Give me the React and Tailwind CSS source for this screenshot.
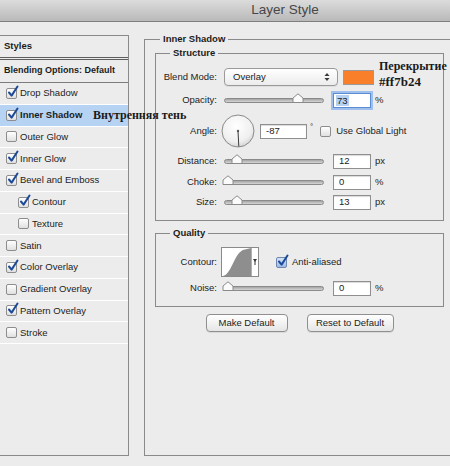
import React from "react";

function Check({ checked, blue }) {
  return (
    <span className="relative inline-block w-[11px] h-[11px] shrink-0">
      <span
        className={
          blue
            ? "absolute inset-0 rounded-[2px] border border-[#6d86ad] bg-linear-to-b from-[#d6e4f7] to-[#9dbbe6]"
            : "absolute inset-0 rounded-[2px] border border-[#8d8d8d] bg-linear-to-b from-white to-[#e0e0e0]"
        }
      />
      {checked && (
        <svg className="absolute left-[1px] top-[-3px]" width="12" height="13" viewBox="0 0 12 13">
          <path
            d="M2 7.5 L4.6 10.6 L10.5 1.5"
            fill="none"
            stroke="#1d4a97"
            strokeWidth="2"
            strokeLinecap="round"
            strokeLinejoin="round"
          />
        </svg>
      )}
    </span>
  );
}

function Slider({ pos }) {
  return (
    <div className="relative w-[100px] h-[5px] rounded-full border border-[#8a8a8a] bg-linear-to-b from-[#a4a4a4] to-[#d6d6d6]">
      <svg className="absolute bottom-[-1px]" style={{ left: pos - 6 }} width="12" height="10" viewBox="0 0 12 10">
        <path d="M1 9.5 V5 L6 0.8 L11 5 V9.5 Z" fill="#fbfbfb" stroke="#8a8a8a" strokeWidth="1" />
      </svg>
    </div>
  );
}

function Field({ value, focus, w = "w-[38px]" }) {
  if (focus) {
    return (
      <div className={`${w} h-[15px] border border-[#5b8bd2] ring-2 ring-[#9fc0ec] bg-white flex items-center pl-[2px]`}>
        <span className="bg-[#b6d1f2] px-[1px] leading-[11px]">{value}</span>
      </div>
    );
  }
  return (
    <div className={`${w} h-[15px] border border-[#8f8f8f] bg-white shadow-[inset_0_1px_1px_rgba(0,0,0,0.15)] flex items-center pl-[5px]`}>
      {value}
    </div>
  );
}

function Label({ children }) {
  return <div className="w-[61px] text-right shrink-0">{children}</div>;
}

function ListRow({ label, checked, indent, active }) {
  return (
    <div
      className={`h-[21.75px] border-b border-white flex items-center ${active ? "bg-[#b7d3f3] font-bold" : ""} ${
        indent ? "pl-[18px]" : "pl-[6px]"
      }`}
    >
      <Check checked={checked} />
      <span className="ml-[3px]">{label}</span>
    </div>
  );
}

export default function App() {
  const rows = [
    ["Drop Shadow", true],
    ["Inner Shadow", true, false, true],
    ["Outer Glow", false],
    ["Inner Glow", true],
    ["Bevel and Emboss", true],
    ["Contour", true, true],
    ["Texture", false, true],
    ["Satin", false],
    ["Color Overlay", true],
    ["Gradient Overlay", false],
    ["Pattern Overlay", true],
    ["Stroke", false],
  ];

  return (
    <div className="relative w-[450px] h-[466px] overflow-hidden bg-[#ececec] font-['Liberation_Sans',Arial,sans-serif] text-[9.5px] text-[#1c1c1c]">
      <div className="h-[22px] border-b border-[#7f7f7f] bg-linear-to-b from-[#dcdcdc] to-[#b9b9b9] flex items-center justify-center pl-[120px] text-[13.5px] text-[#474747]">
        Layer Style
      </div>

      <div className="flex items-start">
        <aside className="mt-[13px] w-[129px] h-[421px] border-t border-r border-b border-[#8a8a8a] shrink-0">
          <div className="h-[24px] border-b-[3px] border-double border-[#5e5e5e] flex items-center pl-[4px] font-bold">
            Styles
          </div>
          <div className="h-[23px] border-b border-[#7c7c7c] flex items-center pl-[4px] font-bold text-[9px]">
            Blending Options: Default
          </div>
          {rows.map(([label, checked, indent, active]) => (
            <ListRow key={label} label={label} checked={checked} indent={indent} active={active} />
          ))}
        </aside>

        <fieldset className="ml-[15px] mt-[11px] w-[320px] h-[423px] min-w-0 border border-[#8a8a8a] pl-[10px] shrink-0">
          <legend className="ml-[5px] px-[3px] font-bold leading-[12px]">Inner Shadow</legend>

          <fieldset className="mt-[2px] w-[289px] min-w-0 border border-[#8a8a8a]">
            <legend className="ml-[14px] px-[3px] font-bold leading-[12px]">Structure</legend>
            <div className="pt-[8px] pb-[8px] flex flex-col">
              <div className="h-[20px] flex items-center">
                <Label>Blend Mode:</Label>
                <div className="ml-[7px] w-[114px] h-[18px] rounded-[4px] border border-[#9a9a9a] bg-linear-to-b from-white to-[#ececec] flex items-center justify-between pl-[8px] pr-[7px] shadow-[0_1px_0_rgba(0,0,0,0.06)]">
                  <span>Overlay</span>
                  <svg width="6" height="10" viewBox="0 0 6 10">
                    <path d="M0.5 4 L3 1 L5.5 4 Z" fill="#3a3a3a" />
                    <path d="M0.5 6 L3 9 L5.5 6 Z" fill="#3a3a3a" />
                  </svg>
                </div>
                <div className="ml-[5px] w-[31px] h-[15px] border border-[#9a9a9a] bg-[#f97f2a]" />
              </div>

              <div className="mt-[3px] h-[20px] flex items-center">
                <Label>Opacity:</Label>
                <div className="ml-[7px]">
                  <Slider pos={73} />
                </div>
                <div className="ml-[9px]">
                  <Field value="73" focus />
                </div>
                <span className="ml-[4px]">%</span>
              </div>

              <div className="mt-[4px] h-[34px] flex items-center">
                <Label>Angle:</Label>
                <svg className="ml-[4px] shrink-0" width="34" height="34" viewBox="0 0 34 34">
                  <defs>
                    <radialGradient id="dial" cx="0.45" cy="0.35" r="0.7">
                      <stop offset="0" stopColor="#ffffff" />
                      <stop offset="0.7" stopColor="#efefef" />
                      <stop offset="1" stopColor="#cfcfcf" />
                    </radialGradient>
                  </defs>
                  <circle cx="17" cy="17" r="16" fill="url(#dial)" stroke="#8a8a8a" strokeWidth="1" />
                  <line x1="17" y1="17" x2="17.8" y2="32.5" stroke="#3c3c3c" strokeWidth="1" />
                  <circle cx="17" cy="17" r="1.2" fill="#555" />
                </svg>
                <div className="ml-[5px]">
                  <Field value="-87" w="w-[47px]" />
                </div>
                <span className="ml-[3px] self-start mt-[7px] text-[8px]">°</span>
                <div className="ml-[7px] flex items-center">
                  <Check checked={false} />
                  <span className="ml-[5px]">Use Global Light</span>
                </div>
              </div>

              <div className="mt-[3px] h-[20px] flex items-center">
                <Label>Distance:</Label>
                <div className="ml-[7px]">
                  <Slider pos={12} />
                </div>
                <div className="ml-[9px]">
                  <Field value="12" />
                </div>
                <span className="ml-[4px]">px</span>
              </div>

              <div className="mt-[1px] h-[20px] flex items-center">
                <Label>Choke:</Label>
                <div className="ml-[7px]">
                  <Slider pos={3} />
                </div>
                <div className="ml-[9px]">
                  <Field value="0" />
                </div>
                <span className="ml-[4px]">%</span>
              </div>

              <div className="h-[20px] flex items-center">
                <Label>Size:</Label>
                <div className="ml-[7px]">
                  <Slider pos={12} />
                </div>
                <div className="ml-[9px]">
                  <Field value="13" />
                </div>
                <span className="ml-[4px]">px</span>
              </div>
            </div>
          </fieldset>

          <fieldset className="mt-[6px] w-[289px] min-w-0 border border-[#8a8a8a]">
            <legend className="ml-[14px] px-[3px] font-bold leading-[12px]">Quality</legend>
            <div className="pt-[8px] pb-[8px] flex flex-col">
              <div className="h-[30px] flex items-center">
                <Label>Contour:</Label>
                <div className="ml-[4px] w-[38px] h-[30px] border border-[#8a8a8a] bg-white flex shrink-0">
                  <svg width="29" height="28" viewBox="0 0 29 28">
                    <path d="M1 28 C 9 27, 12 6, 21 2 L 29 0 L 29 28 Z" fill="#8e8e8e" />
                  </svg>
                  <div className="flex-1 border-l border-[#b0b0b0] flex items-center justify-center">
                    <svg width="4" height="6" viewBox="0 0 4 6">
                      <path d="M0 0 H4 L2 3 Z" fill="#333" />
                      <rect x="1.5" y="2" width="1" height="4" fill="#333" />
                    </svg>
                  </div>
                </div>
                <div className="ml-[17px] flex items-center">
                  <Check checked blue />
                  <span className="ml-[5px]">Anti-aliased</span>
                </div>
              </div>

              <div className="mt-[1px] h-[20px] flex items-center">
                <Label>Noise:</Label>
                <div className="ml-[7px]">
                  <Slider pos={3} />
                </div>
                <div className="ml-[9px]">
                  <Field value="0" />
                </div>
                <span className="ml-[4px]">%</span>
              </div>
            </div>
          </fieldset>

          <div className="mt-[7px] w-[289px] flex justify-center gap-[19px]">
            <div className="w-[82px] h-[18px] rounded-[4px] border border-[#8f8f8f] bg-linear-to-b from-white to-[#e6e6e6] flex items-center justify-center shadow-[0_1px_0_rgba(0,0,0,0.08)]">
              Make Default
            </div>
            <div className="w-[87px] h-[18px] rounded-[4px] border border-[#8f8f8f] bg-linear-to-b from-white to-[#e6e6e6] flex items-center justify-center shadow-[0_1px_0_rgba(0,0,0,0.08)]">
              Reset to Default
            </div>
          </div>
        </fieldset>
      </div>

      <div className="absolute left-[379px] top-[58px] font-['Liberation_Serif',serif] font-bold text-[12px] leading-[16px] text-[#1a1a1a] whitespace-nowrap">
        <div>Перекрытие</div>
        <div className="text-[13px]">#ff7b24</div>
      </div>
      <div className="absolute left-[93px] top-[108px] font-['Liberation_Serif',serif] font-bold text-[12px] leading-[14px] text-[#1a1a1a] whitespace-nowrap">
        Внутренняя тень
      </div>
    </div>
  );
}
